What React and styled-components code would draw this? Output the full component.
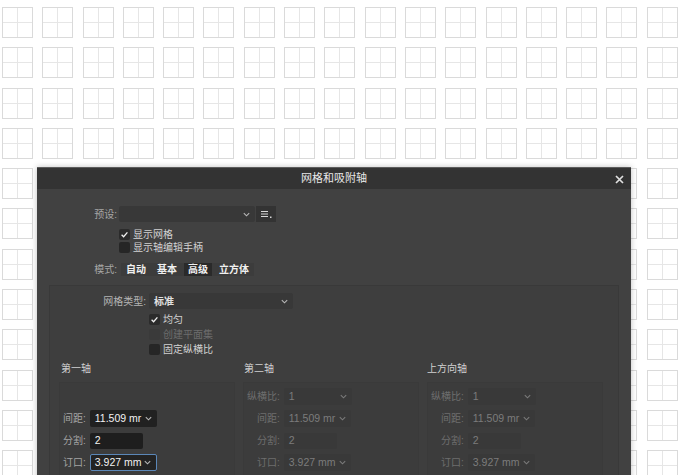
import React from 'react';
import styled, { createGlobalStyle, css } from 'styled-components';

const GlobalStyle = createGlobalStyle`
  html, body {
    margin: 0;
    padding: 0;
    background: #ffffff;
    overflow: hidden;
  }
  body {
    font-family: "Liberation Sans", "Noto Sans CJK SC", sans-serif;
  }
`;

const Canvas = styled.div`
  position: relative;
  width: 680px;
  height: 475px;
  overflow: hidden;
  background: #ffffff;
`;

const GridPattern = styled.div`
  display: grid;
  grid-template-columns: repeat(17, 31px);
  grid-auto-rows: 31px;
  gap: 9.3px;
  padding: 7px 0 0 2px;
`;

const Cell = styled.div`
  box-sizing: border-box;
  border: 1px solid #dadada;
  background:
    linear-gradient(#e6e6e6, #e6e6e6) 14px 0 / 1px 100% no-repeat,
    linear-gradient(#e6e6e6, #e6e6e6) 0 14px / 100% 1px no-repeat,
    #ffffff;
`;

const Dialog = styled.div`
  position: absolute;
  left: 37px;
  top: 167px;
  width: 594px;
  height: 320px;
  background: #414141;
  box-shadow: 0 0 6px rgba(0, 0, 0, 0.25);
  color: #d0d0d0;
  font-size: 10px;
  line-height: 13px;
`;

const TitleBar = styled.div`
  position: relative;
  height: 22px;
  box-sizing: border-box;
  border-top: 1px solid #5c5c5c;
  background: #333333;
  display: flex;
  align-items: center;
  justify-content: center;
  color: #e8e8e8;
  font-size: 11px;
`;

const CloseButton = styled.button`
  position: absolute;
  right: 6px;
  top: 5px;
  width: 12px;
  height: 12px;
  padding: 0;
  border: 0;
  background: transparent;
  display: flex;
  align-items: center;
  justify-content: center;
`;

const Body = styled.div`
  padding-top: 17px;
  display: flex;
  flex-direction: column;
`;

const Row = styled.div`
  display: flex;
  align-items: center;
  height: ${({ $h }) => $h || 16}px;
  margin-top: ${({ $mt }) => $mt || 0}px;
`;

const Label = styled.div`
  width: ${({ $w }) => $w}px;
  text-align: right;
  color: ${({ $c }) => $c || '#a6a6a6'};
  margin-right: ${({ $gap }) => ($gap === undefined ? 2 : $gap)}px;
  white-space: nowrap;
  flex: none;
`;

const Indent = styled.div`
  width: ${({ $w }) => $w}px;
  flex: none;
`;

const Select = styled.div`
  box-sizing: border-box;
  width: ${({ $w }) => $w}px;
  height: ${({ $h }) => $h || 16}px;
  display: flex;
  align-items: center;
  padding: 0 5px 0 5px;
  border-radius: 2px;
  background: #383838;
  color: #e0e0e0;
  ${({ $tone }) =>
    $tone === 'active' &&
    css`
      background: #212121;
      color: #f2f2f2;
    `}
  ${({ $tone }) =>
    $tone === 'focus' &&
    css`
      background: #232323;
      color: #f2f2f2;
      border: 1px solid #5b87b8;
      padding-left: 4px;
    `}
  ${({ $tone }) =>
    $tone === 'disabled' &&
    css`
      background: #393939;
      color: #7c7c7c;
    `}
`;

const Value = styled.span`
  flex: 1;
  white-space: nowrap;
  font-size: ${({ $fs }) => $fs || 10.5}px;
  font-weight: ${({ $bold }) => ($bold ? 700 : 400)};
`;

const MenuButton = styled.div`
  width: 20px;
  height: 16px;
  margin-left: 1px;
  background: #333333;
  display: flex;
  align-items: center;
  justify-content: center;
`;

const CheckRow = styled.label`
  display: flex;
  align-items: center;
  height: ${({ $h }) => $h || 13}px;
  color: ${({ $disabled }) => ($disabled ? '#6c6c6c' : '#d2d2d2')};
`;

const Box = styled.span`
  box-sizing: border-box;
  width: 11px;
  height: 11px;
  border-radius: 2px;
  margin-right: 3px;
  display: flex;
  align-items: center;
  justify-content: center;
  background: ${({ $disabled, $checked }) =>
    $disabled ? '#3a3a3a' : $checked ? '#2b2b2b' : '#262626'};
`;

const Segments = styled.div`
  display: flex;
  align-items: center;
  height: 13px;
  padding: 0 1px;
  background: #3c3c3c;
  gap: 3px;
`;

const Segment = styled.div`
  height: 13px;
  padding: 0 4px;
  display: flex;
  align-items: center;
  color: #f0f0f0;
  font-weight: 700;
  background: ${({ $on }) => ($on ? '#2a2a2a' : 'transparent')};
`;

const Panel = styled.div`
  margin: 9px 12px 0;
  height: 200px;
  border: 1px solid #393939;
  background: #3e3e3e;
  padding-top: 7px;
`;

const Columns = styled.div`
  display: grid;
  grid-template-columns: repeat(3, 176px);
  column-gap: 8px;
  padding-left: 9px;
  margin-top: 5px;
`;

const Column = styled.div`
  display: flex;
  flex-direction: column;
`;

const Heading = styled.div`
  height: 14px;
  padding-left: ${({ $pl }) => $pl}px;
  color: #d0d0d0;
`;

const SubPanel = styled.div`
  margin-top: 6px;
  height: 110px;
  border: 1px solid #3a3a3a;
  background: #3c3c3c;
  padding: 5px 0 0 3px;
  display: grid;
  grid-template-columns: auto auto;
  grid-auto-rows: 17px;
  row-gap: 5px;
  column-gap: 4px;
  justify-content: start;
  align-items: center;
`;

const FieldLabel = styled.div`
  justify-self: end;
  white-space: nowrap;
  color: ${({ $disabled }) => ($disabled ? '#6e6e6e' : '#a4a4a4')};
`;

const Input = styled.div`
  box-sizing: border-box;
  width: ${({ $w }) => $w}px;
  height: 16px;
  padding-left: 5px;
  display: flex;
  align-items: center;
  border-radius: 2px;
  font-size: 10.5px;
  background: ${({ $disabled }) => ($disabled ? '#393939' : '#1e1e1e')};
  color: ${({ $disabled }) => ($disabled ? '#7c7c7c' : '#f2f2f2')};
`;

const Spacer = styled.div`
  grid-column: 1 / 3;
`;

function Chevron({ color = '#b0b0b0' }) {
  return (
    <svg width="7" height="5" viewBox="0 0 7 5">
      <path d="M0.8 1.2 L3.5 3.8 L6.2 1.2" fill="none" stroke={color} strokeWidth="1.1" />
    </svg>
  );
}

function Check() {
  return (
    <svg width="9" height="9" viewBox="0 0 9 9">
      <path d="M1.6 4.8 L3.6 6.7 L7.4 2.3" fill="none" stroke="#f0f0f0" strokeWidth="1.3" />
    </svg>
  );
}

function Checkbox({ checked, disabled, children, h }) {
  return (
    <CheckRow $disabled={disabled} $h={h}>
      <Box $checked={checked} $disabled={disabled}>
        {checked && <Check />}
      </Box>
      {children}
    </CheckRow>
  );
}

function Dropdown({ w, h, tone, value, bold, fs }) {
  const chev = tone === 'disabled' ? '#7a7a7a' : '#b8b8b8';
  return (
    <Select $w={w} $h={h} $tone={tone}>
      <Value $bold={bold} $fs={fs}>{value}</Value>
      <Chevron color={chev} />
    </Select>
  );
}

const axes = [
  {
    title: '第一轴',
    pl: 2,
    disabled: false,
    ratio: false,
    spacingTone: 'active',
    gutterTone: 'focus',
  },
  {
    title: '第二轴',
    pl: 1,
    disabled: true,
    ratio: true,
    spacingTone: 'disabled',
    gutterTone: 'disabled',
  },
  {
    title: '上方向轴',
    pl: 0,
    disabled: true,
    ratio: true,
    spacingTone: 'disabled',
    gutterTone: 'disabled',
  },
];

function AxisColumn({ axis }) {
  const d = axis.disabled;
  return (
    <Column>
      <Heading $pl={axis.pl}>{axis.title}</Heading>
      <SubPanel>
        {axis.ratio ? (
          <>
            <FieldLabel $disabled={d}>纵横比:</FieldLabel>
            <Dropdown w={68} h={17} tone="disabled" value="1" />
          </>
        ) : (
          <Spacer />
        )}
        <FieldLabel $disabled={d}>间距:</FieldLabel>
        <Dropdown w={67} h={17} tone={axis.spacingTone} value="11.509 mr" />
        <FieldLabel $disabled={d}>分割:</FieldLabel>
        <Input $w={53} $disabled={d}>2</Input>
        <FieldLabel $disabled={d}>订口:</FieldLabel>
        <Dropdown w={67} h={17} tone={axis.gutterTone} value="3.927 mm" />
      </SubPanel>
    </Column>
  );
}

export default function App() {
  const cells = Array.from({ length: 17 * 12 });
  return (
    <>
      <GlobalStyle />
      <Canvas>
        <GridPattern>
          {cells.map((_, i) => (
            <Cell key={i} />
          ))}
        </GridPattern>

        <Dialog>
          <TitleBar>
            网格和吸附轴
            <CloseButton aria-label="关闭">
              <svg width="9" height="9" viewBox="0 0 9 9">
                <path d="M1 1 L8 8 M8 1 L1 8" stroke="#e0e0e0" strokeWidth="1.7" />
              </svg>
            </CloseButton>
          </TitleBar>

          <Body>
            <Row>
              <Label $w={80}>预设:</Label>
              <Dropdown w={136} tone="plain" value="" />
              <MenuButton>
                <svg width="14" height="10" viewBox="0 0 14 10">
                  <path d="M2 2.5 H9 M2 5 H9 M2 7.5 H9" stroke="#d6d6d6" strokeWidth="1.2" />
                  <rect x="11" y="7.5" width="1.5" height="1.5" fill="#d6d6d6" />
                </svg>
              </MenuButton>
            </Row>
            <Row $h={13} $mt={6}>
              <Indent $w={82} />
              <Checkbox checked>显示网格</Checkbox>
            </Row>
            <Row $h={13}>
              <Indent $w={82} />
              <Checkbox>显示轴编辑手柄</Checkbox>
            </Row>
            <Row $h={13} $mt={9}>
              <Label $w={80} $gap={4}>模式:</Label>
              <Segments>
                <Segment>自动</Segment>
                <Segment>基本</Segment>
                <Segment $on>高级</Segment>
                <Segment>立方体</Segment>
              </Segments>
            </Row>

            <Panel>
              <Row>
                <Label $w={96} $gap={3} $c="#b4b4b4">网格类型:</Label>
                <Dropdown w={144} tone="plain" value="标准" bold fs={10} />
              </Row>
              <Row $h={15} $mt={3}>
                <Indent $w={99} />
                <Checkbox checked h={15}>均匀</Checkbox>
              </Row>
              <Row $h={15}>
                <Indent $w={99} />
                <Checkbox disabled h={15}>创建平面集</Checkbox>
              </Row>
              <Row $h={15}>
                <Indent $w={99} />
                <Checkbox h={15}>固定纵横比</Checkbox>
              </Row>

              <Columns>
                {axes.map((a) => (
                  <AxisColumn key={a.title} axis={a} />
                ))}
              </Columns>
            </Panel>
          </Body>
        </Dialog>
      </Canvas>
    </>
  );
}
